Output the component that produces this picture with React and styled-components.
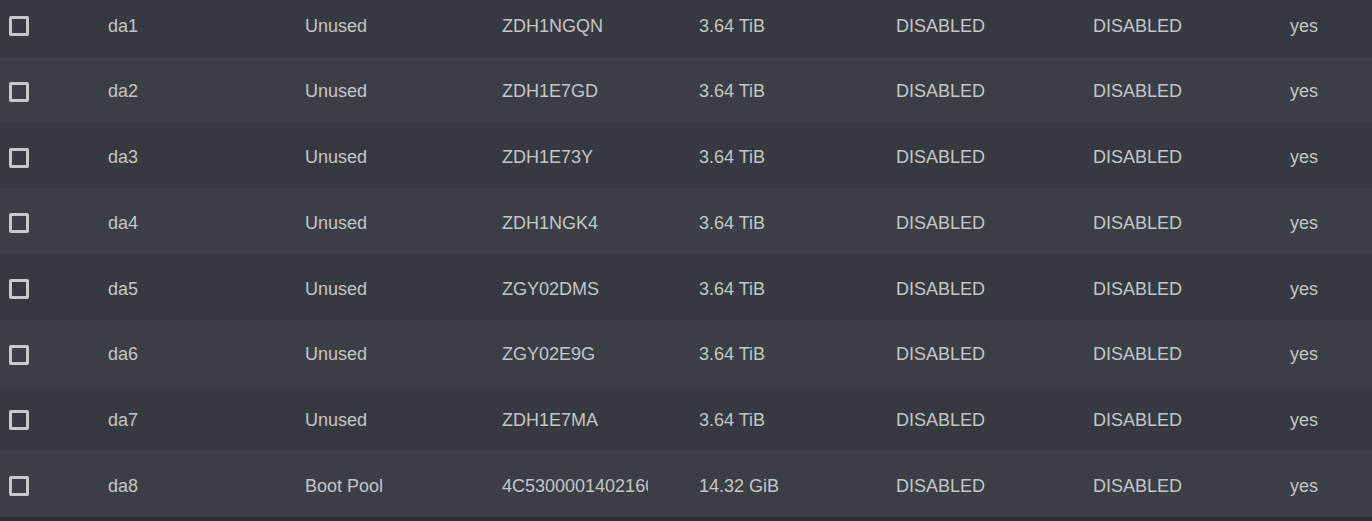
import React from 'react';
import styled, { createGlobalStyle } from 'styled-components';

const GlobalStyle = createGlobalStyle`
  html, body {
    margin: 0;
    padding: 0;
    background: #2b2f34;
  }
  body {
    font-family: "Liberation Sans", Arial, Helvetica, sans-serif;
  }
`;

const disks = [
  { name: 'da1', pool: 'Unused', serial: 'ZDH1NGQN', size: '3.64 TiB' },
  { name: 'da2', pool: 'Unused', serial: 'ZDH1E7GD', size: '3.64 TiB' },
  { name: 'da3', pool: 'Unused', serial: 'ZDH1E73Y', size: '3.64 TiB' },
  { name: 'da4', pool: 'Unused', serial: 'ZDH1NGK4', size: '3.64 TiB' },
  { name: 'da5', pool: 'Unused', serial: 'ZGY02DMS', size: '3.64 TiB' },
  { name: 'da6', pool: 'Unused', serial: 'ZGY02E9G', size: '3.64 TiB' },
  { name: 'da7', pool: 'Unused', serial: 'ZDH1E7MA', size: '3.64 TiB' },
  { name: 'da8', pool: 'Boot Pool', serial: '4C530000140216000', size: '14.32 GiB' },
];

const Viewport = styled.div`
  height: 521px;
  overflow: hidden;
  background: #2b2f34;
`;

const Table = styled.div`
  margin-top: -8.6px;
  display: flex;
  flex-direction: column;
`;

const Row = styled.div`
  box-sizing: border-box;
  display: grid;
  grid-template-columns: 108px repeat(6, 197px) 1fr;
  align-items: center;
  height: 65.7px;
  padding-top: 4px;
  background: ${(p) => (p.$alt ? '#3b3f45' : '#363a40')};
  color: #c4c5c7;
  font-size: 18px;
`;

const Cell = styled.div`
  overflow: hidden;
  white-space: nowrap;
  margin-right: 51px;
`;

const CheckCell = styled.div`
  padding-left: 9px;
  display: flex;
  align-items: center;
`;

const Checkbox = styled.span`
  box-sizing: border-box;
  width: 20px;
  height: 20px;
  border: 3px solid #c8c9cb;
  border-radius: 2px;
`;

export default function App() {
  return (
    <>
      <GlobalStyle />
      <Viewport>
        <Table>
          {disks.map((d, i) => (
            <Row key={d.name} $alt={i % 2 === 1}>
              <CheckCell>
                <Checkbox />
              </CheckCell>
              <Cell>{d.name}</Cell>
              <Cell>{d.pool}</Cell>
              <Cell>{d.serial}</Cell>
              <Cell>{d.size}</Cell>
              <Cell>DISABLED</Cell>
              <Cell>DISABLED</Cell>
              <Cell>yes</Cell>
            </Row>
          ))}
        </Table>
      </Viewport>
    </>
  );
}
